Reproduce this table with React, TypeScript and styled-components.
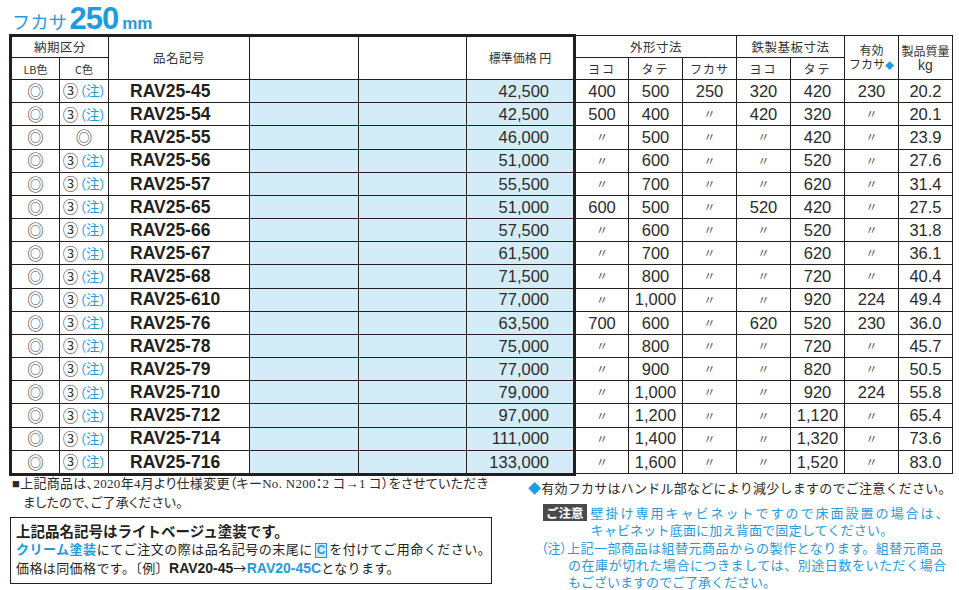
import React from "react";
import styled, { createGlobalStyle } from "styled-components";

const JP = `"Noto Sans CJK JP", sans-serif`;
const NUM = `"Liberation Sans", "Noto Sans CJK JP", sans-serif`;
const SERIF = `"Liberation Serif", "Noto Sans CJK JP", serif`;
const INK = "#231f20";
const BLUE = "#1f9be0";
const FILL = "#d4ebf8";

const Global = createGlobalStyle`
  html, body { margin: 0; padding: 0; background: #fff; }
  body { font-family: ${JP}; color: ${INK}; }
`;

const Page = styled.div`
  width: 959px;
  height: 590px;
  overflow: hidden;
  background: #fff;
`;

const Title = styled.div`
  display: flex;
  align-items: baseline;
  height: 34px;
  box-sizing: border-box;
  padding: 3px 0 0 12px;
  color: ${BLUE};
`;
const TitleLabel = styled.span`
  font-family: ${JP};
  font-size: 18px;
  letter-spacing: 0.5px;
`;
const TitleNumber = styled.span`
  font-family: "Liberation Sans", sans-serif;
  font-weight: 700;
  font-size: 31px;
  line-height: 32px;
  letter-spacing: -1px;
  margin-left: 2px;
`;
const TitleUnit = styled.span`
  font-family: "Liberation Sans", sans-serif;
  font-weight: 700;
  font-size: 17px;
  margin-left: 4px;
`;

const TableRow = styled.div`
  display: flex;
  align-items: flex-start;
  padding-left: 9px;
`;
const FramedGrid = styled.div`
  display: grid;
  grid-template-columns: 47px 48px 140px 108px 107px 106px;
  grid-template-rows: 20px 21px repeat(17, minmax(0, 1fr));
  height: 436px;
  gap: 1px;
  background: ${INK};
  border: 3px solid ${INK};
`;
const SizeGrid = styled.div`
  display: grid;
  grid-template-columns: 52px repeat(6, 53px);
  grid-template-rows: 21px 21px repeat(17, minmax(0, 1fr));
  height: 437px;
  gap: 1px;
  background: ${INK};
  border: 1px solid ${INK};
  border-left: none;
  margin-top: 1px;
`;

const Head = styled.div<{ $col?: string; $row?: string; $size?: number; $ls?: number }>`
  grid-column: ${(p) => p.$col ?? "auto"};
  grid-row: ${(p) => p.$row ?? "auto"};
  background: #fff;
  display: flex;
  flex-direction: column;
  align-items: center;
  justify-content: center;
  font-family: ${JP};
  font-size: ${(p) => p.$size ?? 12.5}px;
  line-height: 14px;
  letter-spacing: ${(p) => p.$ls ?? 0}px;
  color: #333;
  white-space: nowrap;
`;
const HeadLine = styled.span`
  display: block;
  line-height: 14px;
`;
const HeadUnit = styled.span`
  display: block;
  font-family: "Liberation Sans", sans-serif;
  font-size: 14px;
  line-height: 12px;
  margin-top: 1px;
`;
const Diamond = styled.span`
  color: ${BLUE};
  font-size: 9px;
`;

const Cell = styled.div<{ $fill?: boolean }>`
  background: ${(p) => (p.$fill ? FILL : "#fff")};
  display: flex;
  align-items: center;
  justify-content: center;
  min-height: 0;
  line-height: 1;
  white-space: nowrap;
`;
const MarkCell = styled(Cell)`
  font-family: ${JP};
  font-size: 16.5px;
  color: #444;
`;
const NoteCell = styled(Cell)`
  font-family: ${JP};
  font-feature-settings: "palt";
  padding-left: 1px;
`;
const Circled = styled.span`
  font-size: 15.5px;
  color: #333;
`;
const NoteMark = styled.span`
  font-size: 13.5px;
  color: ${BLUE};
  margin-left: 1px;
`;
const NameCell = styled(Cell)`
  justify-content: flex-start;
  padding-left: 21px;
  padding-top: 1px;
  font-family: "Liberation Sans", sans-serif;
  font-weight: 700;
  font-size: 17.5px;
  color: ${INK};
`;
const PriceCell = styled(Cell)`
  justify-content: flex-end;
  padding-right: 24px;
  font-family: ${NUM};
  font-size: 16.5px;
  color: #2b2b2b;
`;
const NumCell = styled(Cell)`
  font-family: ${NUM};
  font-size: 16.5px;
  color: #2b2b2b;
`;
const Ditto = styled.span`
  font-family: ${JP};
  font-size: 12px;
  color: #555;
`;

const Bottom = styled.div`
  display: grid;
  grid-template-columns: 486px 1fr;
  column-gap: 32px;
  padding-left: 10px;
`;
const LeftCol = styled.div`
  display: flex;
  flex-direction: column;
`;
const SpecNote = styled.div`
  margin-top: -2px;
  padding-left: 13px;
  text-indent: -11px;
  font-family: ${SERIF};
  font-feature-settings: "palt";
  font-size: 13px;
  line-height: 19px;
  letter-spacing: 0.3px;
  color: #2b2b2b;
  white-space: nowrap;
`;
const Box = styled.div`
  margin-top: 5px;
  width: 482px;
  height: 67px;
  box-sizing: border-box;
  border: 1px solid ${INK};
  padding: 3px 5px;
  font-family: ${JP};
  white-space: nowrap;
`;
const BoxTitle = styled.div`
  font-size: 14.5px;
  font-weight: 700;
  line-height: 19px;
  color: ${INK};
`;
const BoxLine = styled.div<{ $ls?: number }>`
  font-size: 13px;
  line-height: 18.5px;
  letter-spacing: ${(p) => p.$ls ?? 0}px;
  color: ${INK};
`;
const BlueBold = styled.span`
  color: ${BLUE};
  font-weight: 700;
`;
const InkBold = styled.span`
  font-family: "Liberation Sans", sans-serif;
  font-weight: 700;
  font-size: 14px;
  letter-spacing: 0;
`;
const BlueLatin = styled(InkBold)`
  color: ${BLUE};
`;
const BoxedC = styled.span`
  display: inline-block;
  font-family: "Liberation Sans", sans-serif;
  font-weight: 700;
  font-size: 12px;
  line-height: 13px;
  padding: 0 1px;
  margin: 0 2px;
  color: ${BLUE};
  background: ${FILL};
  border: 1px solid ${BLUE};
  letter-spacing: 0;
`;

const RightCol = styled.div`
  display: flex;
  flex-direction: column;
  font-family: ${JP};
  white-space: nowrap;
`;
const DiamondNote = styled.div`
  margin-top: 4px;
  font-size: 13px;
  line-height: 16px;
  letter-spacing: 0.25px;
  color: #2b2b2b;
`;
const BlueMark = styled.span`
  color: ${BLUE};
`;
const Caution = styled.div`
  display: flex;
  align-items: flex-start;
  margin-top: 8px;
  padding-left: 15px;
`;
const Badge = styled.span`
  background: #4a4a4a;
  color: #fff;
  font-weight: 700;
  font-size: 12.5px;
  line-height: 17px;
  padding: 0 3px;
`;
const CautionText = styled.div`
  margin-left: 4px;
  color: ${BLUE};
`;
const TextLine = styled.div<{ $ls?: number; $indent?: number }>`
  font-size: 13px;
  line-height: 17px;
  letter-spacing: ${(p) => p.$ls ?? 0}px;
  padding-left: ${(p) => p.$indent ?? 0}px;
`;
const Remark = styled.div`
  margin-top: 1px;
  padding-left: 13px;
  color: ${BLUE};
`;
const Paren = styled.span`
  font-feature-settings: "palt";
  letter-spacing: 0;
`;

type Row = {
  c: "note" | "mark";
  name: string;
  price: string;
  v: string[];
};

const D = "〃";
const rows: Row[] = [
  { c: "note", name: "RAV25-45", price: "42,500", v: ["400", "500", "250", "320", "420", "230", "20.2"] },
  { c: "note", name: "RAV25-54", price: "42,500", v: ["500", "400", D, "420", "320", D, "20.1"] },
  { c: "mark", name: "RAV25-55", price: "46,000", v: [D, "500", D, D, "420", D, "23.9"] },
  { c: "note", name: "RAV25-56", price: "51,000", v: [D, "600", D, D, "520", D, "27.6"] },
  { c: "note", name: "RAV25-57", price: "55,500", v: [D, "700", D, D, "620", D, "31.4"] },
  { c: "note", name: "RAV25-65", price: "51,000", v: ["600", "500", D, "520", "420", D, "27.5"] },
  { c: "note", name: "RAV25-66", price: "57,500", v: [D, "600", D, D, "520", D, "31.8"] },
  { c: "note", name: "RAV25-67", price: "61,500", v: [D, "700", D, D, "620", D, "36.1"] },
  { c: "note", name: "RAV25-68", price: "71,500", v: [D, "800", D, D, "720", D, "40.4"] },
  { c: "note", name: "RAV25-610", price: "77,000", v: [D, "1,000", D, D, "920", "224", "49.4"] },
  { c: "note", name: "RAV25-76", price: "63,500", v: ["700", "600", D, "620", "520", "230", "36.0"] },
  { c: "note", name: "RAV25-78", price: "75,000", v: [D, "800", D, D, "720", D, "45.7"] },
  { c: "note", name: "RAV25-79", price: "77,000", v: [D, "900", D, D, "820", D, "50.5"] },
  { c: "note", name: "RAV25-710", price: "79,000", v: [D, "1,000", D, D, "920", "224", "55.8"] },
  { c: "note", name: "RAV25-712", price: "97,000", v: [D, "1,200", D, D, "1,120", D, "65.4"] },
  { c: "note", name: "RAV25-714", price: "111,000", v: [D, "1,400", D, D, "1,320", D, "73.6"] },
  { c: "note", name: "RAV25-716", price: "133,000", v: [D, "1,600", D, D, "1,520", D, "83.0"] },
];

export default function App() {
  return (
    <Page>
      <Global />
      <Title>
        <TitleLabel>フカサ</TitleLabel>
        <TitleNumber>250</TitleNumber>
        <TitleUnit>mm</TitleUnit>
      </Title>

      <TableRow>
        <FramedGrid>
          <Head $col="1 / span 2" $row="1" $size={12.5} $ls={0.5}>納期区分</Head>
          <Head $col="3" $row="1 / span 2" $size={12.5} $ls={0.5}>品名記号</Head>
          <Head $col="4" $row="1 / span 2" />
          <Head $col="5" $row="1 / span 2" />
          <Head $col="6" $row="1 / span 2" $size={12}>標準価格 円</Head>
          <Head $col="1" $row="2" $size={11}>LB色</Head>
          <Head $col="2" $row="2" $size={11}>C色</Head>
          {rows.map((r) => (
            <React.Fragment key={r.name}>
              <MarkCell>◎</MarkCell>
              {r.c === "note" ? (
                <NoteCell>
                  <Circled>③</Circled>
                  <NoteMark>（注）</NoteMark>
                </NoteCell>
              ) : (
                <MarkCell>◎</MarkCell>
              )}
              <NameCell>{r.name}</NameCell>
              <Cell $fill />
              <Cell $fill />
              <PriceCell $fill>{r.price}</PriceCell>
            </React.Fragment>
          ))}
        </FramedGrid>

        <SizeGrid>
          <Head $col="1 / span 3" $row="1" $ls={0.5}>外形寸法</Head>
          <Head $col="4 / span 2" $row="1" $ls={0.5}>鉄製基板寸法</Head>
          <Head $col="6" $row="1 / span 2" $size={12}>
            <HeadLine>有効</HeadLine>
            <HeadLine>
              フカサ<Diamond>◆</Diamond>
            </HeadLine>
          </Head>
          <Head $col="7" $row="1 / span 2" $size={12}>
            <HeadLine>製品質量</HeadLine>
            <HeadUnit>kg</HeadUnit>
          </Head>
          <Head $size={12} $ls={2}>ヨコ</Head>
          <Head $size={12} $ls={2}>タテ</Head>
          <Head $size={12} $ls={1}>フカサ</Head>
          <Head $size={12} $ls={2}>ヨコ</Head>
          <Head $size={12} $ls={2}>タテ</Head>
          {rows.map((r) =>
            r.v.map((val, i) => (
              <NumCell key={r.name + i}>{val === D ? <Ditto>{D}</Ditto> : val}</NumCell>
            ))
          )}
        </SizeGrid>
      </TableRow>

      <Bottom>
        <LeftCol>
          <SpecNote>
            ■上記商品は、2020年4月より仕様変更（キーNo. N200：2 コ→1 コ）をさせていただき
            <br />
            ましたので、ご了承ください。
          </SpecNote>
          <Box>
            <BoxTitle>上記品名記号はライトベージュ塗装です。</BoxTitle>
            <BoxLine $ls={0.5}>
              <BlueBold>クリーム塗装</BlueBold>にてご注文の際は品名記号の末尾に<BoxedC>C</BoxedC>を付けてご用命ください。
            </BoxLine>
            <BoxLine $ls={0.4}>
              価格は同価格です。〔例〕<InkBold>RAV20-45</InkBold>→<BlueLatin>RAV20-45C</BlueLatin>となります。
            </BoxLine>
          </Box>
        </LeftCol>

        <RightCol>
          <DiamondNote>
            <BlueMark>◆</BlueMark>有効フカサはハンドル部などにより減少しますのでご注意ください。
          </DiamondNote>
          <Caution>
            <Badge>ご注意</Badge>
            <CautionText>
              <TextLine $ls={2}>壁掛け専用キャビネットですので床面設置の場合は、</TextLine>
              <TextLine $ls={0.2}>キャビネット底面に加え背面で固定してください。</TextLine>
            </CautionText>
          </Caution>
          <Remark>
            <TextLine $ls={0.5}>
              <Paren>（注）</Paren>上記一部商品は組替元商品からの製作となります。組替元商品
            </TextLine>
            <TextLine $ls={0.55} $indent={27}>の在庫が切れた場合につきましては、別途日数をいただく場合</TextLine>
            <TextLine $indent={27}>もございますのでご了承ください。</TextLine>
          </Remark>
        </RightCol>
      </Bottom>
    </Page>
  );
}
